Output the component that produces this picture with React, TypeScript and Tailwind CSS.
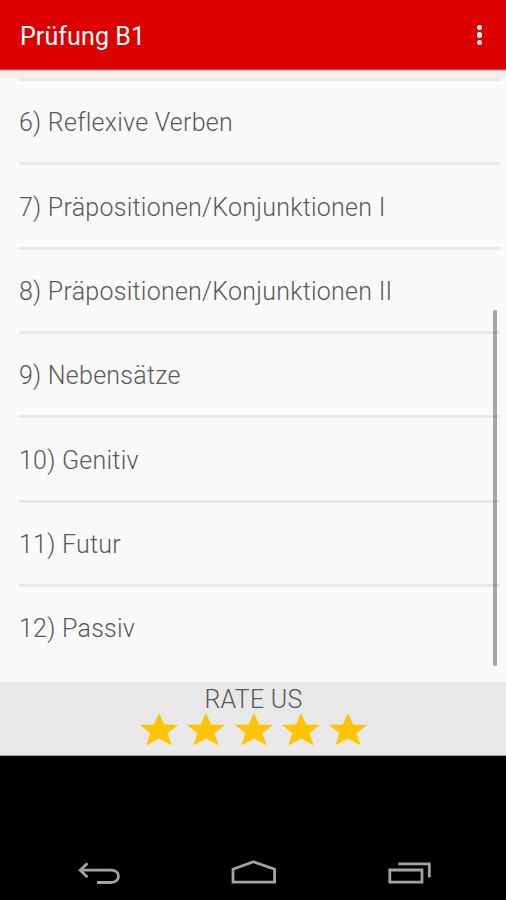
const lessons: string[] = [
  "6) Reflexive Verben",
  "7) Präpositionen/Konjunktionen I",
  "8) Präpositionen/Konjunktionen II",
  "9) Nebensätze",
  "10) Genitiv",
  "11) Futur",
  "12) Passiv",
];

function Star() {
  return (
    <svg width="38" height="33" viewBox="0 0 38 33" fill="#ffc505">
      <path d="M19 0 L24.2 11.4 L38 12 L27.6 20.2 L31.8 32.5 L19 25.6 L6.2 32.5 L10.4 20.2 L0 12 L13.8 11.4 Z" />
    </svg>
  );
}

function AppBar() {
  return (
    <header className="relative z-10 flex h-[70px] shrink-0 items-center justify-between border-b border-[#a85c5c] bg-[#dd0000] pl-[20px] pr-[24px] shadow-[0_1px_1px_rgba(0,0,0,0.2)]">
      <h1 className="mt-[5px] text-[25px] leading-8 tracking-[0.1px] text-white">Prüfung B1</h1>
      <button type="button" aria-label="Menu" className="mt-px flex flex-col gap-[2px]">
        {[1, 2, 3].map((i) => (
          <span key={i} className="h-[5.4px] w-[5.4px] rounded-full bg-white" />
        ))}
      </button>
    </header>
  );
}

function LessonList() {
  return (
    <main className="relative h-[612px] shrink-0 bg-[#fafafa]">
      <div className="h-[8px] bg-[#f0f0f0]" />
      <ul className="ml-[19px] mr-[6px] border-t-[3px] border-[#e8e8e8]">
        {lessons.map((lesson) => (
          <li
            key={lesson}
            className="flex h-[84.35px] items-center border-b-[3px] border-[#e8e8e8] pt-[3px] text-[25px] font-[350] tracking-[0.25px] text-[#595959] last:border-b-0 last:pt-0"
          >
            {lesson}
          </li>
        ))}
      </ul>
      <div className="absolute right-[9.5px] top-[240px] h-[356px] w-[4px] rounded-[1px] bg-black/33" />
    </main>
  );
}

function RateBar() {
  return (
    <footer className="flex h-[74px] shrink-0 flex-col items-center border-b border-[#999999] bg-[#e8e8e8]">
      <span className="ml-px mt-[4px] text-[25px] font-[350] leading-[27px] tracking-[0.25px] text-[#595959]">
        RATE US
      </span>
      <div className="ml-px flex gap-[9.3px]">
        {[1, 2, 3, 4, 5].map((i) => (
          <Star key={i} />
        ))}
      </div>
    </footer>
  );
}

function NavBar() {
  return (
    <nav className="flex flex-1 items-end justify-between bg-black pb-[16px] pl-[77px] pr-[75px]">
      <svg width="44" height="27" viewBox="0 0 44 27" fill="none" stroke="#a3a3a3" strokeWidth="2.8">
        <path d="M3 13.2 H34 C44 13.2 44 25.5 34 25.5 H20" />
        <path d="M10.5 6.2 L3.2 13.2 L10.5 20.2" />
      </svg>
      <svg width="48" height="27" viewBox="0 0 48 27" fill="none" stroke="#a3a3a3" strokeWidth="2.8">
        <path d="M3 25.2 V12.2 L23.6 4.8 L44.6 12.2 V25.2 Z" />
      </svg>
      <svg width="44" height="27" viewBox="0 0 44 27" fill="none" stroke="#a3a3a3" strokeWidth="2.8">
        <path d="M2.8 13 H35 V25.2 H2.8 Z" />
        <path d="M11.3 6.8 H42.3 V20.5" />
      </svg>
    </nav>
  );
}

export default function App() {
  return (
    <div className="flex h-[900px] w-[506px] flex-col overflow-hidden bg-[#fafafa] font-[Roboto,sans-serif]">
      <AppBar />
      <LessonList />
      <RateBar />
      <NavBar />
    </div>
  );
}
